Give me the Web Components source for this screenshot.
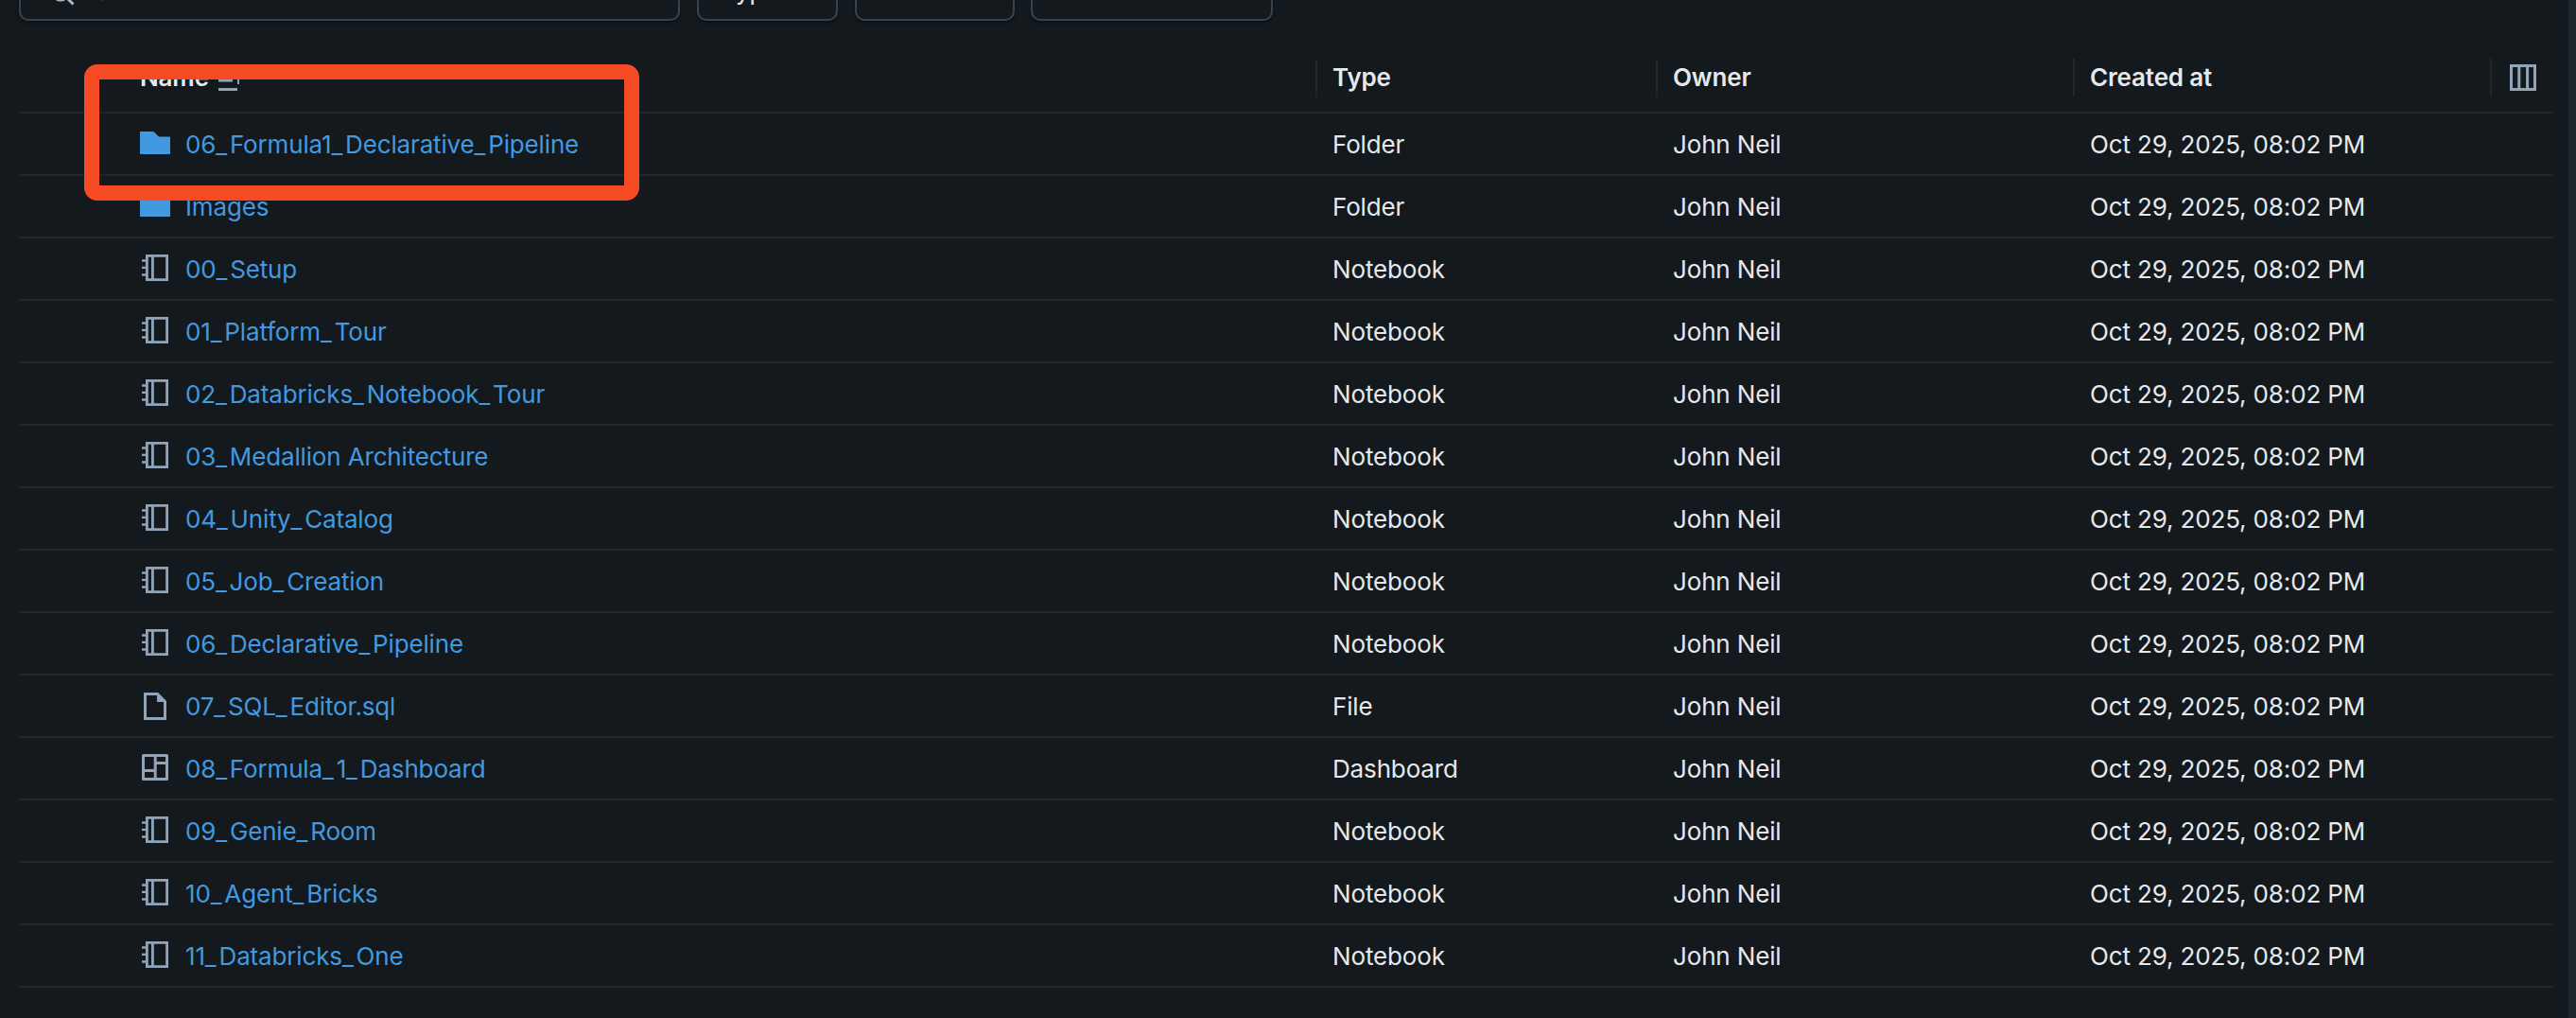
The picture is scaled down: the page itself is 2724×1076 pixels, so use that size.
<!DOCTYPE html>
<html lang="en">
<head>
<meta charset="utf-8">
<title>Workspace</title>
<style>
html,body{margin:0;padding:0;height:100%;background:#13191d;overflow:hidden}
body{font-family:Inter,"Noto Sans",sans-serif;font-size:26px;letter-spacing:-.15px;color:#e5e9ed}
</style>
</head>
<body>
<workspace-page>
  <tool-bar slot="toolbar">
    <search-box placeholder="Search"></search-box>
    <filter-button style="width:149px">Type</filter-button>
    <filter-button style="width:169px">Owner</filter-button>
    <filter-button style="width:256px">Last modified</filter-button>
  </tool-bar>
  <file-table>
    <file-head></file-head>
    <file-row icon="folder" name="06_Formula1_Declarative_Pipeline" kind="Folder"></file-row>
    <file-row icon="folder" name="Images" kind="Folder"></file-row>
    <file-row icon="notebook" name="00_Setup" kind="Notebook"></file-row>
    <file-row icon="notebook" name="01_Platform_Tour" kind="Notebook"></file-row>
    <file-row icon="notebook" name="02_Databricks_Notebook_Tour" kind="Notebook"></file-row>
    <file-row icon="notebook" name="03_Medallion Architecture" kind="Notebook"></file-row>
    <file-row icon="notebook" name="04_Unity_Catalog" kind="Notebook"></file-row>
    <file-row icon="notebook" name="05_Job_Creation" kind="Notebook"></file-row>
    <file-row icon="notebook" name="06_Declarative_Pipeline" kind="Notebook"></file-row>
    <file-row icon="file" name="07_SQL_Editor.sql" kind="File"></file-row>
    <file-row icon="dashboard" name="08_Formula_1_Dashboard" kind="Dashboard"></file-row>
    <file-row icon="notebook" name="09_Genie_Room" kind="Notebook"></file-row>
    <file-row icon="notebook" name="10_Agent_Bricks" kind="Notebook"></file-row>
    <file-row icon="notebook" name="11_Databricks_One" kind="Notebook"></file-row>
  </file-table>
  <call-out slot="overlay"></call-out>
</workspace-page>
<script>
const COLS = '1371px 360px 441px 441px 67px';
const ICONS = {
  folder: '<path fill="#4299e0" d="M0 4a1 1 0 0 1 1-1h13.500l5.500 5.500h11a1 1 0 0 1 1 1V26a1 1 0 0 1-1 1H1a1 1 0 0 1-1-1z"/>',
  notebook: '<g fill="none" stroke="#92a4b8" stroke-width="2.800"><path d="M7.400 2.400h21.200v25.200H7.400zM13.400 2.400v25.200"/></g><path fill="#92a4b8" d="M2 6.300h4v2.400H2zM2 13.700h4V16H2zM2 21.300h4v2.400H2z"/>',
  file: '<path fill="none" stroke="#92a4b8" stroke-width="3" d="M5.500 3.500h13l8 8v18h-21z"/><path fill="#92a4b8" d="M18 4l8 8h-8z"/>',
  dashboard: '<path fill="none" stroke="#92a4b8" stroke-width="3" stroke-linejoin="round" d="M3.500 2.500h25v25h-25zM16.200 2.500v25M3.500 18.500h12.700M16.200 10.500h12.300"/>'
};
function def(name, html, init) {
  const t = document.createElement('template');
  t.innerHTML = html;
  customElements.define(name, class extends HTMLElement {
    constructor(){ super(); this.attachShadow({mode:'open'}).appendChild(t.content.cloneNode(true)); }
    connectedCallback(){ if (init) init(this); }
  });
}
const cellCss = `
:host{display:grid;grid-template-columns:${COLS};box-sizing:border-box;border-bottom:2px solid #1f272e;align-items:center;white-space:nowrap;line-height:32px}
.c{display:flex;align-items:center;padding-left:18px;height:40px;box-sizing:border-box}
.c.first{padding-left:128px}`;
def('file-head', `
<style>${cellCss}
:host{height:74px;font-weight:600;color:#e5e9ed}
.d{border-left:2px solid #1f272e;padding-left:16px}
.sort{width:24px;height:28px;margin-left:10px;flex:none;transform:translate(0,7px)}
.cols{width:28px;height:28px;flex:none}
.d.a{padding-left:19px}
</style>
<div class="c first">Name<svg class="sort" viewBox="0 0 24 28" fill="#92a4b8"><path d="M0 0h10v2.500H0zM0 9h15v2.500H0zM0 18h20v3H0zM20 8h2v6h-2z"/></svg></div>
<div class="c d">Type</div><div class="c d">Owner</div><div class="c d">Created at</div>
<div class="c d a"><svg class="cols" viewBox="0 0 28 28" fill="none" stroke="#92a4b8" stroke-width="3"><path d="M1.500 1.500h25v25h-25zM9.800 1.500v25M18.600 1.500v25"/></svg></div>`);
def('file-row', `
<style>${cellCss}
:host{height:66px;color:#e5e9ed}
.c{padding-top:2px}
svg{width:32px;height:32px;flex:none;margin:-2px 16px 0 0}
a{color:#4299e0;text-decoration:none}
.u{letter-spacing:2.800px}
</style>
<div class="c first"><svg viewBox="0 0 32 32"></svg><a href="#"></a></div>
<div class="c kind"></div><div class="c">John Neil</div><div class="c">Oct 29, 2025, 08:02 PM</div><div></div>`, el => {
  const r = el.shadowRoot;
  r.querySelector('svg').innerHTML = ICONS[el.getAttribute('icon')];
  const a = r.querySelector('a');
  a.textContent = '';
  el.getAttribute('name').split(/(_)/).forEach(part => {
    if (part === '_') { const s = document.createElement('span'); s.className = 'u'; s.textContent = '_'; a.append(s); }
    else if (part) a.append(part);
  });
  r.querySelector('.kind').textContent = el.getAttribute('kind');
});
def('workspace-page', `
<style>
:host{display:flex;width:2724px;height:1076px;position:relative;overflow:hidden;background:#13191d}
main{flex:1;min-width:0;padding:0 16px 0 20px;box-sizing:border-box}
aside{width:8px;background:#1f272e;flex:none}
</style>
<main><slot name="toolbar"></slot><slot></slot></main><aside></aside><slot name="overlay"></slot>`);
def('tool-bar', `
<style>:host{display:flex;height:64px;margin-top:-42px;gap:18px;align-items:stretch}
::slotted(*:last-child){margin-left:-1px}</style><slot></slot>`);
def('search-box', `
<style>
:host{display:flex;align-items:center;gap:20px;width:699px;box-sizing:border-box;padding:0 0 0 31px;border:2px solid #37444f;border-radius:10px;color:#92a4b8;box-shadow:0 2px 3px #0c1013}
svg{width:26px;height:26px;flex:none;transform:translate(0,3px)}
</style>
<svg viewBox="0 0 26 26" fill="none" stroke="#a9b8c8" stroke-width="3"><circle cx="11" cy="11" r="9"/><path d="M17.500 17.500l7 7"/></svg>
<span></span>`, el => { el.shadowRoot.querySelector('span').textContent = el.getAttribute('placeholder') || 'Search'; });
def('filter-button', `
<style>
:host{display:flex;align-items:center;justify-content:flex-start;gap:10px;box-sizing:border-box;border:2px solid #37444f;border-radius:10px;color:#e5e9ed;box-shadow:0 2px 3px #0c1013;padding-left:24px}
svg{width:24px;height:24px;flex:none}
</style>
<slot></slot><svg viewBox="0 0 24 24" fill="none" stroke="#92a4b8" stroke-width="3"><path d="M5 9l7 7 7-7"/></svg>`);
def('file-table', `<style>:host{display:block;margin-top:24px;width:2680px}</style><slot></slot>`);
def('call-out', `
<style>:host{position:absolute;left:89px;top:68px;width:587px;height:144px;box-sizing:border-box;border:16px solid #f54a24;border-radius:14px;pointer-events:none}</style>`);
</script>
</body>
</html>
